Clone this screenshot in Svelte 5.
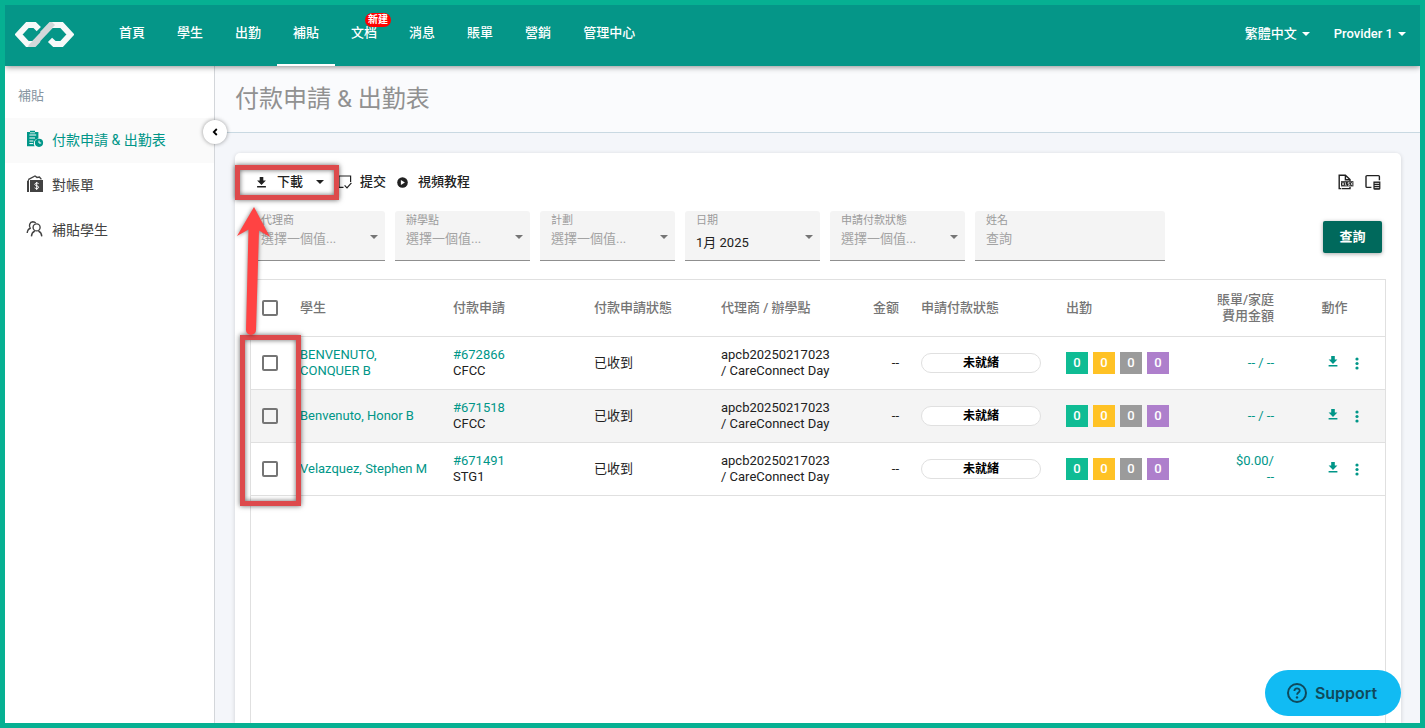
<script lang="ts">
	type Row = {
		student: string, claim: string, program: string, bill: string[]
	}

	const navItems = ['首頁', '學生', '出勤', '補貼', '文档', '消息', '賬單', '營銷', '管理中心'];
	const activeNav = '補貼';

	const filters = [
		{ id: 'agency', label: '代理商', value: '選擇一個值...' },
		{ id: 'site', label: '辦學點', value: '選擇一個值...' },
		{ id: 'program', label: '計劃', value: '選擇一個值...' },
		{ id: 'date', label: '日期', value: '1月 2025', filled: true },
		{ id: 'payment', label: '申請付款狀態', value: '選擇一個值...' },
	];

	const rows: Row[] = [
		{ student: 'BENVENUTO, CONQUER B', claim: '#672866', program: 'CFCC', bill: ['-- / --'] },
		{ student: 'Benvenuto, Honor B', claim: '#671518', program: 'CFCC', bill: ['-- / --'] },
		{ student: 'Velazquez, Stephen M', claim: '#671491', program: 'STG1', bill: ['$0.00/', '--'] },
	];
	const counts = ['present', 'late', 'absent', 'other'];

	let selected = $state([false, false, false]);
	let allSelected = $derived(selected.every(Boolean));

	const toggleAll = () => {
		const next = !allSelected;
		selected = selected.map(() => next);
	}
</script>

{#snippet downloadIcon()}
	<svg class="download-icon" viewBox="0 0 10 11" aria-hidden="true">
		<path d="M3.2 0h3.6v3.6H9.400L5 8 .6 3.600h2.600zM.6 9h8.800v1.600H.6z" fill="currentColor" />
	</svg>
{/snippet}

<div class="app">
	<header class="topbar">
		<a class="logo" href="#home" aria-label="Home">
			<svg viewBox="15 22 59 25" fill="none" stroke-width="6">
				<path d="M33.5 44 51.5 25" stroke="#d3d8da" />
				<path d="M38.8 29.2 34.6 25H27.4L18.6 34.5 27.4 44H35" stroke="#f7f9f9" />
				<path d="M28 47h7.5l5-5.2-4-4.2-7.5 7z" fill="#d3d8da" />
				<path d="M50 25H61.6L70.4 34.5 61.6 44H54.4L50 39.8" stroke="#f7f9f9" />
				<path d="M52 22h-2.5L40 32l4.2 4.2L55 25z" fill="#d3d8da" />
			</svg>
		</a>
		<nav class="main-nav">
			{#each navItems as item}
				<a href="#{item}" class={{ active: item === activeNav }}>
					{item}
					{#if item === '文档'}<span class="new-badge">新建</span>{/if}
				</a>
			{/each}
		</nav>
		<div class="account">
			<button class="menu-button">繁體中文<span class="caret"></span></button>
			<button class="menu-button">Provider 1<span class="caret"></span></button>
		</div>
	</header>

	<div class="body">
		<aside class="sidebar">
			<h2>補貼</h2>
			<a href="#claims" class="active">
				<svg viewBox="0 0 18 18" fill="currentColor">
					<path d="M1 2h3V.8h5V2h3.4v6.4a5 5 0 0 0-3.8 7.8H1z" />
					<path d="M3.4 5h6.8M3.4 8h5.6M3.4 11h4M3.4 13.6h3.6" stroke="#fff" stroke-width="1" />
					<path d="M4 2.8h5" stroke="#fff" stroke-width=".8" />
					<circle cx="13" cy="12.8" r="4.1" />
					<path d="M13 10.6v2.4h2.2" stroke="#fff" stroke-width="1" fill="none" />
				</svg>
				<span>付款申請 &amp; 出勤表</span>
			</a>
			<a href="#statements">
				<svg viewBox="0 0 18 18" fill="currentColor">
					<path d="M1 6l2-1.6V17H1zM4 5h13v12H4z" />
					<path d="M2.2 4.6 9 1l2 1.4L13.4 2l2 2.4" fill="none" stroke="currentColor" stroke-width="1.4" />
					<path d="M12.6 8.6c-.8-.8-3.800-.8-3.800.8 0 1.700 3.800 1 3.800 2.800 0 1.700-3 1.700-4 .6M10.700 7v8" fill="none" stroke="#fff" stroke-width="1" />
				</svg>
				<span>對帳單</span>
			</a>
			<a href="#students">
				<svg viewBox="0 0 18 18" fill="none" stroke="currentColor" stroke-width="1.4">
					<circle cx="10.6" cy="7.4" r="3.5" />
					<path d="M5.4 16.4c.2-3 1.6-4.6 3.4-5.4M12.4 11c1.8.8 3.2 2.4 3.4 5.4M4.2 8.2C2.6 6 3.6 1.8 6.8 1.7c1.4 0 2.3.5 2.9 1.3M1.2 13c.2-2.6 1.4-4.2 3.6-5" />
				</svg>
				<span>補貼學生</span>
			</a>
			<button class="collapse" aria-label="Collapse sidebar">
				<svg viewBox="0 0 6 8"><path d="M4.8 1 1.8 4l3 3" fill="none" stroke="#000" stroke-width="1.8" /></svg>
			</button>
		</aside>

		<main>
			<div class="page-title"><h1>付款申請 &amp; 出勤表</h1></div>
			<section class="card">
				<div class="toolbar">
					<button class="tool download">{@render downloadIcon()}<span>下載</span><span class="caret"></span></button>
					<button class="tool submit">
						<svg class="wide" viewBox="0 0 14 14" fill="none" stroke="currentColor" stroke-width="1.2">
							<path d="M5.5 12.4H1V1h11.6v6M6.6 10.4 9 12.8l4.4-5" />
						</svg>
						<span>提交</span>
					</button>
					<button class="tool video">
						<svg viewBox="0 0 11 11"><circle cx="5.5" cy="5.5" r="5.3" fill="currentColor" /><path d="M3.9 3v5l4-2.5z" fill="#fff" /></svg>
						<span>視頻教程</span>
					</button>
					<div class="tool-icons">
						<button aria-label="XLSX">
							<svg viewBox="0 0 16 16" fill="none" stroke="currentColor" stroke-width="1.4">
								<path d="M3.4 14.6H1.2V1.2h6.2L12 5.6V7M7.4 1.2v4.6H12M12 13v1.6H4" />
								<path d="M3 7.2h12.4v5.2H3z" fill="currentColor" stroke="none" />
								<path d="M4 8.4l2 3m0-3-2 3M7.4 8.2v3h1.4M11.6 8.6H10v1.3h1.4v1.4H9.9M12.8 8.4l1.8 3m0-3-1.8 3" stroke="#fff" stroke-width=".7" />
							</svg>
						</button>
						<button aria-label="Columns">
							<svg viewBox="0 0 16 16" fill="none" stroke="currentColor" stroke-width="1.4">
								<path d="M6.4 13.4H2a1 1 0 0 1-1-1V2.6a1 1 0 0 1 1-1h11.4a1 1 0 0 1 1 1v3.6" />
								<path d="M8.4 7.4h7v7a1.4 1.4 0 0 1-1.4 1.4H9.8a1.4 1.4 0 0 1-1.4-1.4z" fill="currentColor" stroke="none" />
								<path d="M9.6 9.4h4.6M9.6 11.5h4.6M9.6 13.6h4.6" stroke="#fff" stroke-width=".8" />
							</svg>
						</button>
					</div>
				</div>

				<div class="filters">
					{#each filters as f}
						<div class={['field', 'drop', { filled: f.filled }]}>
							<label for={f.id}>{f.label}</label>
							<select id={f.id}><option>{f.value}</option></select>
						</div>
					{/each}
					<div class="field name">
						<label for="name">姓名</label>
						<input id="name" type="text" placeholder="查詢" />
					</div>
					<button class="search">查詢</button>
				</div>

				<div class="grid">
					<table>
						<colgroup>
							<col class="c-check" /><col class="c-student" /><col class="c-claim" /><col class="c-status" />
							<col class="c-agency" /><col class="c-amount" /><col class="c-payment" /><col class="c-attendance" />
							<col class="c-bill" /><col class="c-actions" />
						</colgroup>
						<thead>
							<tr>
								<th><input type="checkbox" aria-label="Select all" checked={allSelected} onchange={toggleAll} /></th>
								<th>學生</th>
								<th>付款申請</th>
								<th>付款申請狀態</th>
								<th>代理商 / 辦學點</th>
								<th class="right">金额</th>
								<th class="payment">申請付款狀態</th>
								<th>出勤</th>
								<th class="right">賬單/家庭<br />費用金額</th>
								<th class="center">動作</th>
							</tr>
						</thead>
						<tbody>
							{#each rows as row, i}
								<tr>
									<td><input type="checkbox" aria-label={row.student} bind:checked={selected[i]} /></td>
									<td class="student"><a href="#student">{row.student}</a></td>
									<td><a href="#claim">{row.claim}</a><br />{row.program}</td>
									<td>已收到</td>
									<td>apcb20250217023<br />/ CareConnect Day</td>
									<td class="right">--</td>
									<td class="payment"><span class="pill">未就緒</span></td>
									<td>
										<div class="counts">
											{#each counts as kind}<span class={kind}>0</span>{/each}
										</div>
									</td>
									<td class="right">
										<a href="#bill">{#each row.bill as line}<span class="line">{line}</span>{/each}</a>
									</td>
									<td>
										<div class="actions">
											<button class="get" aria-label="Download">{@render downloadIcon()}</button>
											<button aria-label="More">
												<svg class="dots" viewBox="0 0 4 13" fill="currentColor"><circle cx="2" cy="2" r="1.6" /><circle cx="2" cy="6.5" r="1.6" /><circle cx="2" cy="11" r="1.6" /></svg>
											</button>
										</div>
									</td>
								</tr>
							{/each}
						</tbody>
					</table>
				</div>
			</section>
		</main>
	</div>

	<!-- tutorial callouts over the page -->
	<div class="callout callout-download"></div>
	<div class="callout callout-rows"></div>
	<svg class="arrow" viewBox="0 0 40 134" aria-hidden="true">
		<path d="M19 2 35 32 24 25.5 21 125a5 5 0 0 1-10 0L13.5 24.5 2 31z" fill="#ff4343" />
	</svg>

	<button class="support">
		<svg viewBox="0 0 20 20" fill="none" stroke="currentColor" stroke-width="2">
			<circle cx="10" cy="10" r="9" />
			<path d="M7.4 8c0-3.6 5.3-3.4 5.3-.3 0 1.9-2.6 1.9-2.6 4" stroke-width="1.8" />
			<circle cx="10" cy="14.4" r="1.2" fill="currentColor" stroke="none" />
		</svg>
		<span>Support</span>
	</button>
</div>

<style>
:global(body) { margin:0; }
.app {
	position: relative;
	box-sizing: border-box;
	height: 100vh;
	display: flex;
	flex-direction: column;
	overflow: hidden;
	border: 5px solid #06b092;
	background: #f4f6fa;
	color: #212121;
	font: 13px/16px Roboto, "Noto Sans CJK TC", sans-serif;
}
button {
	padding: 0;
	border: 0;
	background: none;
	color: inherit;
	font: inherit;
	cursor: pointer;
}
a { color:#009688; text-decoration:none; }
svg { display:block; flex:none; }
.caret {
	border: 4px solid transparent;
	border-top-color: currentColor;
	border-bottom: 0;
}

.topbar {
	position: relative;
	z-index: 2;
	flex: none;
	display: flex;
	height: 61px;
	background: #059688;
	box-shadow: 0 1px 6px rgba(0,0,0,.45);
	color: #fff;
	font-weight: 500;
}
.logo { align-self:center; margin:0 29px 2px 10px; }
.logo svg { width:59px; height:25px; }
.main-nav { display:flex; }
.main-nav a {
	position: relative;
	display: flex;
	align-items: center;
	padding: 0 16px 3px;
	border-bottom: 2px solid transparent;
	color: #fff;
	line-height: 20px;
}
.main-nav a.active { border-bottom-color:#fff; }
.new-badge {
	position: absolute;
	top: 8px;
	right: 2px;
	padding: 0 3px;
	border-radius: 7px;
	background: #f00;
	font-size: 10px;
	font-weight: 700;
	line-height: 14px;
}
.account {
	display: flex;
	gap: 24px;
	margin-left: auto;
	padding: 0 14px 4px 0;
}
.menu-button { display:flex; align-items:center; gap:5px; }

.body { flex:1; display:flex; min-height:0; }
.sidebar {
	position: relative;
	z-index: 1;
	flex: none;
	width: 209px;
	border-right: 1px solid #d3d6da;
	background: #fff;
}
.sidebar h2 {
	margin: 0;
	padding: 21px 13px 13px;
	color: #8795a1;
	font-size: 13px;
	font-weight: 400;
	line-height: 18px;
}
.sidebar a {
	display: flex;
	align-items: center;
	gap: 8px;
	box-sizing: border-box;
	height: 45px;
	padding: 0 21px 2px;
	color: #424242;
	font-size: 14px;
}
.sidebar a.active { background:#fafafa; color:#009688; }
.sidebar a svg { width:18px; height:18px; margin-bottom:2px; }
.collapse {
	position: absolute;
	top: 54px;
	right: -13px;
	display: grid;
	place-items: center;
	width: 24px;
	height: 24px;
	border-radius: 50%;
	background: #fff;
	box-shadow: 0 0 4px rgba(0,0,0,.4);
}
.collapse svg { width:6px; height:8px; }

main { flex:1; display:flex; flex-direction:column; min-width:0; }
.page-title { padding:16px 20px; border-bottom:1px solid #c9d9e2; background:#fafbfd; }
.page-title h1 {
	margin: 0;
	color: #919191;
	font-size: 24px;
	font-weight: 400;
	line-height: 34px;
}
.card {
	flex: 1;
	display: flex;
	flex-direction: column;
	margin: 20px 19px 0 20px;
	padding: 13px 15px 0;
	border-radius: 5px 5px 0 0;
	background: #fff;
	box-shadow: 0 1px 4px rgba(0,0,0,.16);
}
.toolbar { display:flex; align-items:center; height:32px; padding:0 5px 0 6px; }
.tool { display:flex; align-items:center; gap:10px; font-weight:500; }
.tool svg { width:11px; height:11px; }
.tool svg.wide { width:14px; height:14px; }
.tool .caret { margin-left:3px; }
.tool.submit { margin:0 11px 0 14px; gap:8px; }
.tool-icons { display:flex; gap:11px; margin-left:auto; }
.tool-icons svg { width:16px; height:16px; }
.download-icon { width:10px; height:11px; }

.filters { display:flex; gap:10px; margin:13px 4px 18px 0; }
.field {
	position: relative;
	box-sizing: border-box;
	display: flex;
	flex-direction: column;
	width: 135px;
	height: 50px;
	padding: 3px 11px 0;
	border-bottom: 1px solid #8f8f8f;
	border-radius: 3px 3px 0 0;
	background: #f4f4f4;
}
.field.name { width:190px; }
.field label { color:#9b9b9b; font-size:11px; line-height:13px; }
.field select, .field input {
	appearance: none;
	width: 100%;
	height: 22px;
	padding: 0;
	border: 0;
	outline: 0;
	background: none;
	color: #a3a3a3;
	font: inherit;
}
.field select { height:24px; }
.field input::placeholder { color:#a3a3a3; }
.filled select { height:31px; color:#212121; }
.drop::after {
	content: '';
	position: absolute;
	top: 24px;
	right: 7px;
	border: 4px solid transparent;
	border-top-color: #757575;
	border-bottom: 0;
}
.search {
	align-self: flex-end;
	margin: 0 0 8px auto;
	width: 59px;
	height: 32px;
	border-radius: 2px;
	background: #00695c;
	box-shadow: 0 1px 4px rgba(0,0,0,.35);
	color: #fff;
	font-weight: 700;
}

.grid { flex:1; border:1px solid #e0e0e0; border-bottom:0; }
table { width:100%; table-layout:fixed; border-spacing:0; }
.c-check { width:39px; }
.c-student { width:153px; }
.c-claim { width:141px; }
.c-status { width:127px; }
.c-agency { width:130px; }
.c-amount { width:68px; }
.c-payment { width:147px; }
.c-attendance { width:138px; }
.c-bill { width:90px; }
.c-actions { width:101px; }
th, td {
	box-sizing: border-box;
	height: 53px;
	padding: 0 10px;
	border-bottom: 1px solid #e0e0e0;
	text-align: left;
	white-space: nowrap;
}
th { height:57px; color:#757575; font-weight:500; }
tbody tr:nth-child(even) { background:#f4f4f4; }
.right { text-align:right; }
.center { text-align:center; }
.payment { padding-left:12px; }
.student { white-space:normal; }
.line { display:block; }
input[type=checkbox] {
	appearance: none;
	display: block;
	box-sizing: border-box;
	width: 16px;
	height: 16px;
	margin: 0 1px;
	border: 2px solid #757575;
	border-radius: 2px;
}
input[type=checkbox]:checked { border-color:#009688; background:#009688; }
.pill {
	display: block;
	box-sizing: border-box;
	width: 120px;
	height: 20px;
	border: 1px solid #e0e0e0;
	border-radius: 10px;
	background: #fff;
	color: #000;
	font-size: 12px;
	font-weight: 700;
	line-height: 18px;
	text-align: center;
}
.counts { display:flex; gap:5px; }
.counts span {
	width: 22px;
	color: #fff;
	font-weight: 500;
	line-height: 22px;
	text-align: center;
}
.present { background:#0fbc94; }
.late { background:#ffc225; }
.absent { background:#9b9b9b; }
.other { background:#ae7fcc; }
.actions { display:flex; align-items:center; justify-content:center; gap:17px; padding-left:18px; color:#009688; }
.get { padding-bottom:4px; }
.dots { width:4px; height:13px; }

.callout {
	position: absolute;
	z-index: 3;
	box-sizing: border-box;
	border: 5px solid #dd4a4c;
	box-shadow: 0 0 5px rgba(0,0,0,.6), inset 0 0 5px rgba(0,0,0,.6);
	pointer-events: none;
}
.callout-download { top:160px; left:230px; width:104px; height:35px; }
.callout-rows { top:330px; left:235px; width:61px; height:171px; }
.arrow {
	position: absolute;
	z-index: 4;
	top: 200px;
	left: 230px;
	width: 40px;
	height: 134px;
	filter: drop-shadow(0 0 2px rgba(0,0,0,.5));
	pointer-events: none;
}
.support {
	position: absolute;
	z-index: 3;
	right: 19px;
	bottom: 7px;
	display: flex;
	align-items: center;
	justify-content: center;
	gap: 8px;
	width: 136px;
	height: 46px;
	padding-right: 2px;
	border-radius: 23px;
	background: #11bbf3;
	color: #0f4a5c;
	font: 600 16px/20px Inter, sans-serif;
}
.support svg { width:20px; height:20px; }
</style>
